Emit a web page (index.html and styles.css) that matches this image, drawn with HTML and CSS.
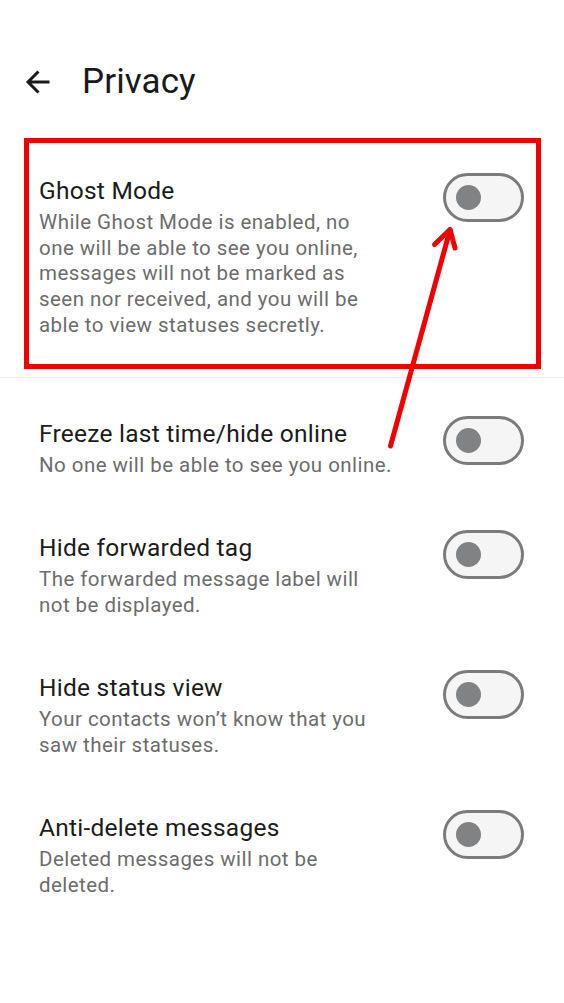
FILE: index.html
```html
<!DOCTYPE html>
<html lang="en">
<head>
<meta charset="utf-8">
<title>Privacy</title>
<link rel="stylesheet" href="styles.css">
</head>
<body>
<div class="screen">
  <header class="topbar">
    <svg class="back" width="26" height="26" viewBox="0 0 26 26" aria-hidden="true">
      <path d="M24.5 13H3M13.5 2.5L3 13l10.5 10.5" fill="none" stroke="#1a1a1a" stroke-width="3" stroke-linecap="butt" stroke-linejoin="miter"/>
    </svg>
    <h1 class="title">Privacy</h1>
  </header>

  <section class="group">
    <div class="row highlighted">
      <div class="text">
        <div class="row-title">Ghost Mode</div>
        <div class="row-desc">While Ghost Mode is enabled, no<br>one will be able to see you online,<br>messages will not be marked as<br>seen nor received, and you will be<br>able to view statuses secretly.</div>
      </div>
      <span class="switch"><span class="knob"></span></span>
      <span class="redbox"></span>
    </div>
  </section>
  <div class="divider"></div>

  <section class="group">
    <div class="row">
      <div class="text">
        <div class="row-title">Freeze last time/hide online</div>
        <div class="row-desc">No one will be able to see you online.</div>
      </div>
      <span class="switch"><span class="knob"></span></span>
    </div>
    <div class="row">
      <div class="text">
        <div class="row-title">Hide forwarded tag</div>
        <div class="row-desc">The forwarded message label will<br>not be displayed.</div>
      </div>
      <span class="switch"><span class="knob"></span></span>
    </div>
    <div class="row">
      <div class="text">
        <div class="row-title">Hide status view</div>
        <div class="row-desc">Your contacts won’t know that you<br>saw their statuses.</div>
      </div>
      <span class="switch"><span class="knob"></span></span>
    </div>
    <div class="row">
      <div class="text">
        <div class="row-title">Anti-delete messages</div>
        <div class="row-desc">Deleted messages will not be<br>deleted.</div>
      </div>
      <span class="switch"><span class="knob"></span></span>
    </div>
  </section>

  <svg class="pointer" width="564" height="1003" viewBox="0 0 564 1003" aria-hidden="true">
    <g fill="none" stroke="#f00000" stroke-width="5" stroke-linecap="round" stroke-linejoin="round">
      <path d="M390.5 446L450 230"/>
      <path d="M434.5 244.5L450 229.5L455 248"/>
    </g>
  </svg>
</div>
</body>
</html>
```

FILE: styles.css
```css
html, body {
  margin: 0;
  padding: 0;
  background: #ffffff;
}

body {
  font-family: Roboto, "Noto Sans", "Liberation Sans", sans-serif;
  color: #1c1c1c;
}

.screen {
  position: relative;
  width: 564px;
  min-height: 1003px;
  overflow: hidden;
}

.topbar {
  display: flex;
  align-items: center;
  gap: 31px;
  padding: 62px 0 0 25px;
  height: 40px;
  margin-bottom: 46px;
}

.back {
  flex: none;
  display: block;
}

.title {
  margin: 0;
  font-size: 35px;
  font-weight: 400;
  line-height: 40px;
  color: #1a1a1a;
  letter-spacing: 0.1px;
}

.group {
  display: flex;
  flex-direction: column;
}

.row {
  position: relative;
  display: flex;
  align-items: flex-start;
  justify-content: space-between;
  padding: 26px 40px 26.6px 39px;
}

.text {
  flex: 1;
  min-width: 0;
}

.row-title {
  font-size: 24.5px;
  line-height: 34px;
  color: #1b1b1b;
  letter-spacing: 0.25px;
}

.row-desc {
  margin-top: 2px;
  font-size: 20.5px;
  line-height: 25.7px;
  color: #6c6c6c;
  letter-spacing: 0.45px;
}

.switch {
  flex: none;
  box-sizing: border-box;
  width: 81px;
  height: 49px;
  border: 3px solid #7b7b7b;
  border-radius: 25px;
  background: #f5f5f5;
  display: flex;
  align-items: center;
  padding-left: 9.5px;
  margin-top: -1px;
}

.knob {
  width: 25px;
  height: 25px;
  border-radius: 50%;
  background: #808284;
}

.divider {
  height: 1px;
  background: #ececec;
  margin: 12px 0 12.6px;
}

.redbox {
  position: absolute;
  left: 24px;
  right: 23px;
  top: -10px;
  bottom: -4px;
  border: 5px solid #f00000;
  pointer-events: none;
}

.pointer {
  position: absolute;
  left: 0;
  top: 0;
  pointer-events: none;
}
```
